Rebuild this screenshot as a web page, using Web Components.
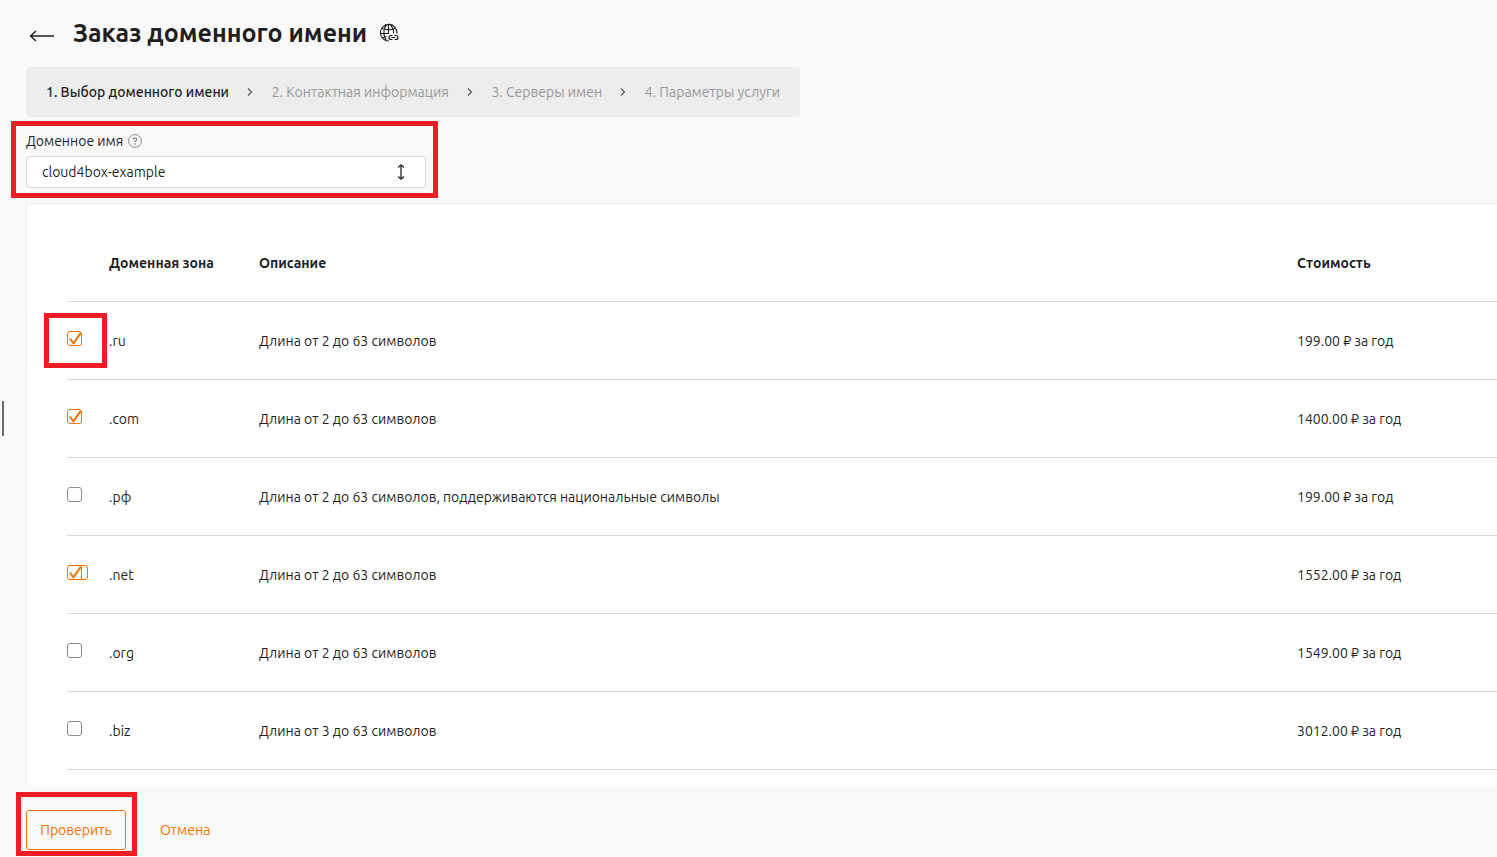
<!DOCTYPE html>
<html lang="ru">
<head>
<meta charset="utf-8">
<meta name="viewport" content="width=device-width, initial-scale=1">
<title>Заказ доменного имени</title>
<style>
  :root {
    --text: #1f1f1f;
    --muted: #989898;
    --accent: #f57300;
    --line: #d9d9d9;
    --mark: #ee1c25;
  }
  body {
    margin: 0;
    background: #f9f9f9;
    color: var(--text);
    font: 14px/20px Ubuntu, "Noto Sans", sans-serif;
  }
</style>
</head>
<body>
<order-page>
  <page-title slot="header">Заказ доменного имени</page-title>
  <step-bar slot="steps"></step-bar>
  <mark-frame slot="field" style="--t:-13px;--r:-12px;--b:-10px;--l:-15px"><domain-field></domain-field></mark-frame>
  <zone-table></zone-table>
  <form-actions slot="footer"></form-actions>
</order-page>

<script>
const define = (name, html, setup) => {
  const template = document.createElement('template');
  template.innerHTML = html;
  customElements.define(name, class extends HTMLElement {
    constructor() {
      super();
      this.attachShadow({ mode: 'open' }).append(template.content.cloneNode(true));
    }
    connectedCallback() {
      if (setup && !this.ready) { this.ready = true; setup(this, this.shadowRoot); }
    }
  });
};

/* Red outline drawn around the slotted content; --t/--r/--b/--l set its reach */
define('mark-frame', `
<style>
  :host { display: block; position: relative; width: fit-content; max-width: 100%; }
  :host::after {
    content: ""; position: absolute; z-index: 1; pointer-events: none;
    inset: var(--t) var(--r) var(--b) var(--l);
    border: 5px solid var(--mark);
  }
</style>
<slot></slot>`);

define('page-title', `
<style>
  :host { display: flex; align-items: center; height: 67px; }
  a { display: flex; margin: 5px 18px 0 3px; color: var(--text); }
  h1 { margin: 0 0 2px; font-size: 25px; line-height: 32px; font-weight: 700; }
  .globe { margin: 0 0 2px 12px; }
  svg { display: block; fill: none; stroke: currentColor; }
</style>
<a href="#" aria-label="Назад">
  <svg width="26" height="14" viewBox="0 0 26 14" stroke-width="1.4"><path d="M7 2 1.500 7 7 12M1.500 7H25"/></svg>
</a>
<h1><slot></slot></h1>
<svg class="globe" width="20" height="20" viewBox="0 0 20 20" stroke-width="1.1">
  <path d="M18 10.500A8.300 8.300 0 1 0 10 18M8.500 1.300C3.800 5 3.800 13 8 18M10.500 1.300C13 3 14.600 6 14.700 10.500M9.500 1.300V11M3 5.500Q9.500 8 16 5.500M1.300 10.500H9.500M3 15Q5 13.800 7.500 13.600"/>
  <path d="M13.500 12.500H12a2 2 0 0 0 0 4h1.500M15.500 12.500H17a2 2 0 0 1 0 4h-1.500M12.500 14.500h4" stroke-width="1.200"/>
</svg>`);

define('step-bar', `
<style>
  :host { display: block; }
  ol {
    box-sizing: border-box; display: flex; align-items: center; justify-content: space-between;
    width: 774px; max-width: 100%; height: 50px; margin: 0; padding: 0 20px;
    list-style: none; background: #ededed; border-radius: 4px; color: var(--muted);
    white-space: nowrap;
  }
  [aria-current] { color: var(--text); font-weight: 500; }
  svg { display: block; fill: none; stroke: #555; stroke-width: 1.2; }
</style>
<ol></ol>`, (host, root) => {
  const steps = ['Выбор доменного имени', 'Контактная информация', 'Серверы имен', 'Параметры услуги'];
  root.querySelector('ol').innerHTML = steps.map((s, i) =>
    `<li${i ? '' : ' aria-current="step"'}>${i + 1}. ${s}</li>`
  ).join('<li role="presentation"><svg width="6" height="10" viewBox="0 0 6 10"><path d="M1 1.500 4.500 5 1 8.500"/></svg></li>');
});

define('domain-field', `
<style>
  :host { display: block; width: 400px; max-width: 100%; }
  .caption { display: flex; align-items: center; gap: 5px; height: 14px; margin-bottom: 8px; }
  .caption svg { color: #888; }
  .box {
    box-sizing: border-box; display: flex; align-items: center; height: 32px;
    padding: 0 18px 0 15px; background: #fff; border: 1px solid var(--line); border-radius: 3px;
  }
  input {
    flex: 1; min-width: 0; padding: 0; border: 0; outline: 0; background: none;
    font: inherit; color: inherit;
  }
  button { display: flex; padding: 0; border: 0; background: none; color: #333; }
</style>
<div class="caption">
  <label for="domain">Доменное имя</label>
  <svg width="14" height="14" viewBox="0 0 14 14" fill="none" stroke="currentColor"><circle cx="7" cy="7" r="6.400"/><path d="M5.200 5.700C5.200 3.300 8.900 3.400 8.800 5.500 8.700 6.700 7 6.700 7 8.300M7 9.300v1.400" stroke-width="1.300"/></svg>
</div>
<div class="box">
  <input id="domain" type="text" value="cloud4box-example">
  <button type="button" aria-label="Развернуть">
    <svg width="12" height="18" viewBox="0 0 12 18" fill="none" stroke="currentColor" stroke-width="1.400"><path d="M3 4.500 6 2 9 4.500M6 2v14M3 13.500 6 16 9 13.500"/></svg>
  </button>
</div>`);

define('check-box', `
<style>
  :host {
    display: block; width: 15px;
    --tick: url("data:image/svg+xml,%3Csvg xmlns='http://www.w3.org/2000/svg' viewBox='0 0 13 13' fill='none' stroke='%23f57300' stroke-width='2'%3E%3Cpath d='M1.800 6.500 5.500 11.300 12.800 .8'/%3E%3C/svg%3E");
  }
  input {
    appearance: none; box-sizing: border-box; display: block; width: 15px; height: 15px;
    margin: 0; border: 1px solid #8c8c8c; border-radius: 3px; background: #fff;
  }
  input:checked { border-color: var(--accent); background: var(--tick) 0 0 / 13px 13px no-repeat; }
  :host([wide]) input { width: 21px; }
  :host([wide]) input:checked {
    background: linear-gradient(var(--accent), var(--accent)) 13px 0 / 1px 13px no-repeat,
      var(--tick) 0 0 / 13px 13px no-repeat;
  }
</style>
<input type="checkbox">`, (host, root) => {
  const input = root.querySelector('input');
  input.checked = host.hasAttribute('checked');
  input.setAttribute('aria-label', host.getAttribute('label'));
});

define('zone-table', `
<style>
  :host {
    display: block; padding: 20px 0 15px 40px; background: #fff;
    border: solid #ebebeb; border-width: 1px 0 0 1px; border-top-left-radius: 4px;
  }
  table { width: 100%; border-collapse: separate; border-spacing: 0; table-layout: fixed; }
  th, td { box-sizing: border-box; height: 78px; padding: 0; border-bottom: 1px solid var(--line); text-align: left; }
  th { font-weight: 700; }
  .pick { width: 42px; }
  .zone { width: 150px; }
  .cost { width: 200px; }
  td:first-child { vertical-align: top; padding-top: 29px; }
</style>
<table>
  <thead><tr><th class="pick"></th><th class="zone">Доменная зона</th><th>Описание</th><th class="cost">Стоимость</th></tr></thead>
  <tbody></tbody>
</table>`, (host, root) => {
  const length = 'Длина от 2 до 63 символов';
  const zones = [
    ['.ru', length, '199.00', 'checked', true],
    ['.com', length, '1400.00', 'checked'],
    ['.рф', length + ', поддерживаются национальные символы', '199.00', ''],
    ['.net', length, '1552.00', 'checked wide'],
    ['.org', length, '1549.00', ''],
    ['.biz', 'Длина от 3 до 63 символов', '3012.00', '']
  ];
  root.querySelector('tbody').innerHTML = zones.map(([zone, text, price, flags, marked]) => {
    const box = `<check-box label="${zone}" ${flags}></check-box>`;
    const cell = marked ? `<mark-frame style="--t:-18px;--r:-25px;--b:-22px;--l:-23px">${box}</mark-frame>` : box;
    return `<tr><td>${cell}</td><td>${zone}</td><td>${text}</td><td>${price} ₽ за год</td></tr>`;
  }).join('');
});

define('form-actions', `
<style>
  :host { display: flex; align-items: center; gap: 20px; padding: 25px 0 7px; }
  button {
    display: block; height: 40px; padding: 0 13px; border: 1px solid transparent; border-radius: 3px;
    background: none; color: var(--accent); font: inherit; cursor: pointer;
  }
  .primary { min-width: 100px; border-color: var(--accent); }
</style>
<mark-frame style="--t:-18px;--r:-11px;--b:-6px;--l:-10px"><button class="primary" type="submit">Проверить</button></mark-frame>
<button type="button">Отмена</button>`);

define('order-page', `
<style>
  :host { display: grid; grid-template-columns: 26px minmax(0, 1fr); min-height: 100vh; }
  .rail { display: flex; align-items: center; height: 837px; max-height: 100vh; }
  .rail i { width: 2px; height: 35px; margin-left: 2px; background: #6b6b6b; }
  .field { padding: 17px 0 15px; }
</style>
<div class="rail"><i></i></div>
<main>
  <slot name="header"></slot>
  <slot name="steps"></slot>
  <div class="field"><slot name="field"></slot></div>
  <slot></slot>
  <slot name="footer"></slot>
</main>`);
</script>
</body>
</html>
